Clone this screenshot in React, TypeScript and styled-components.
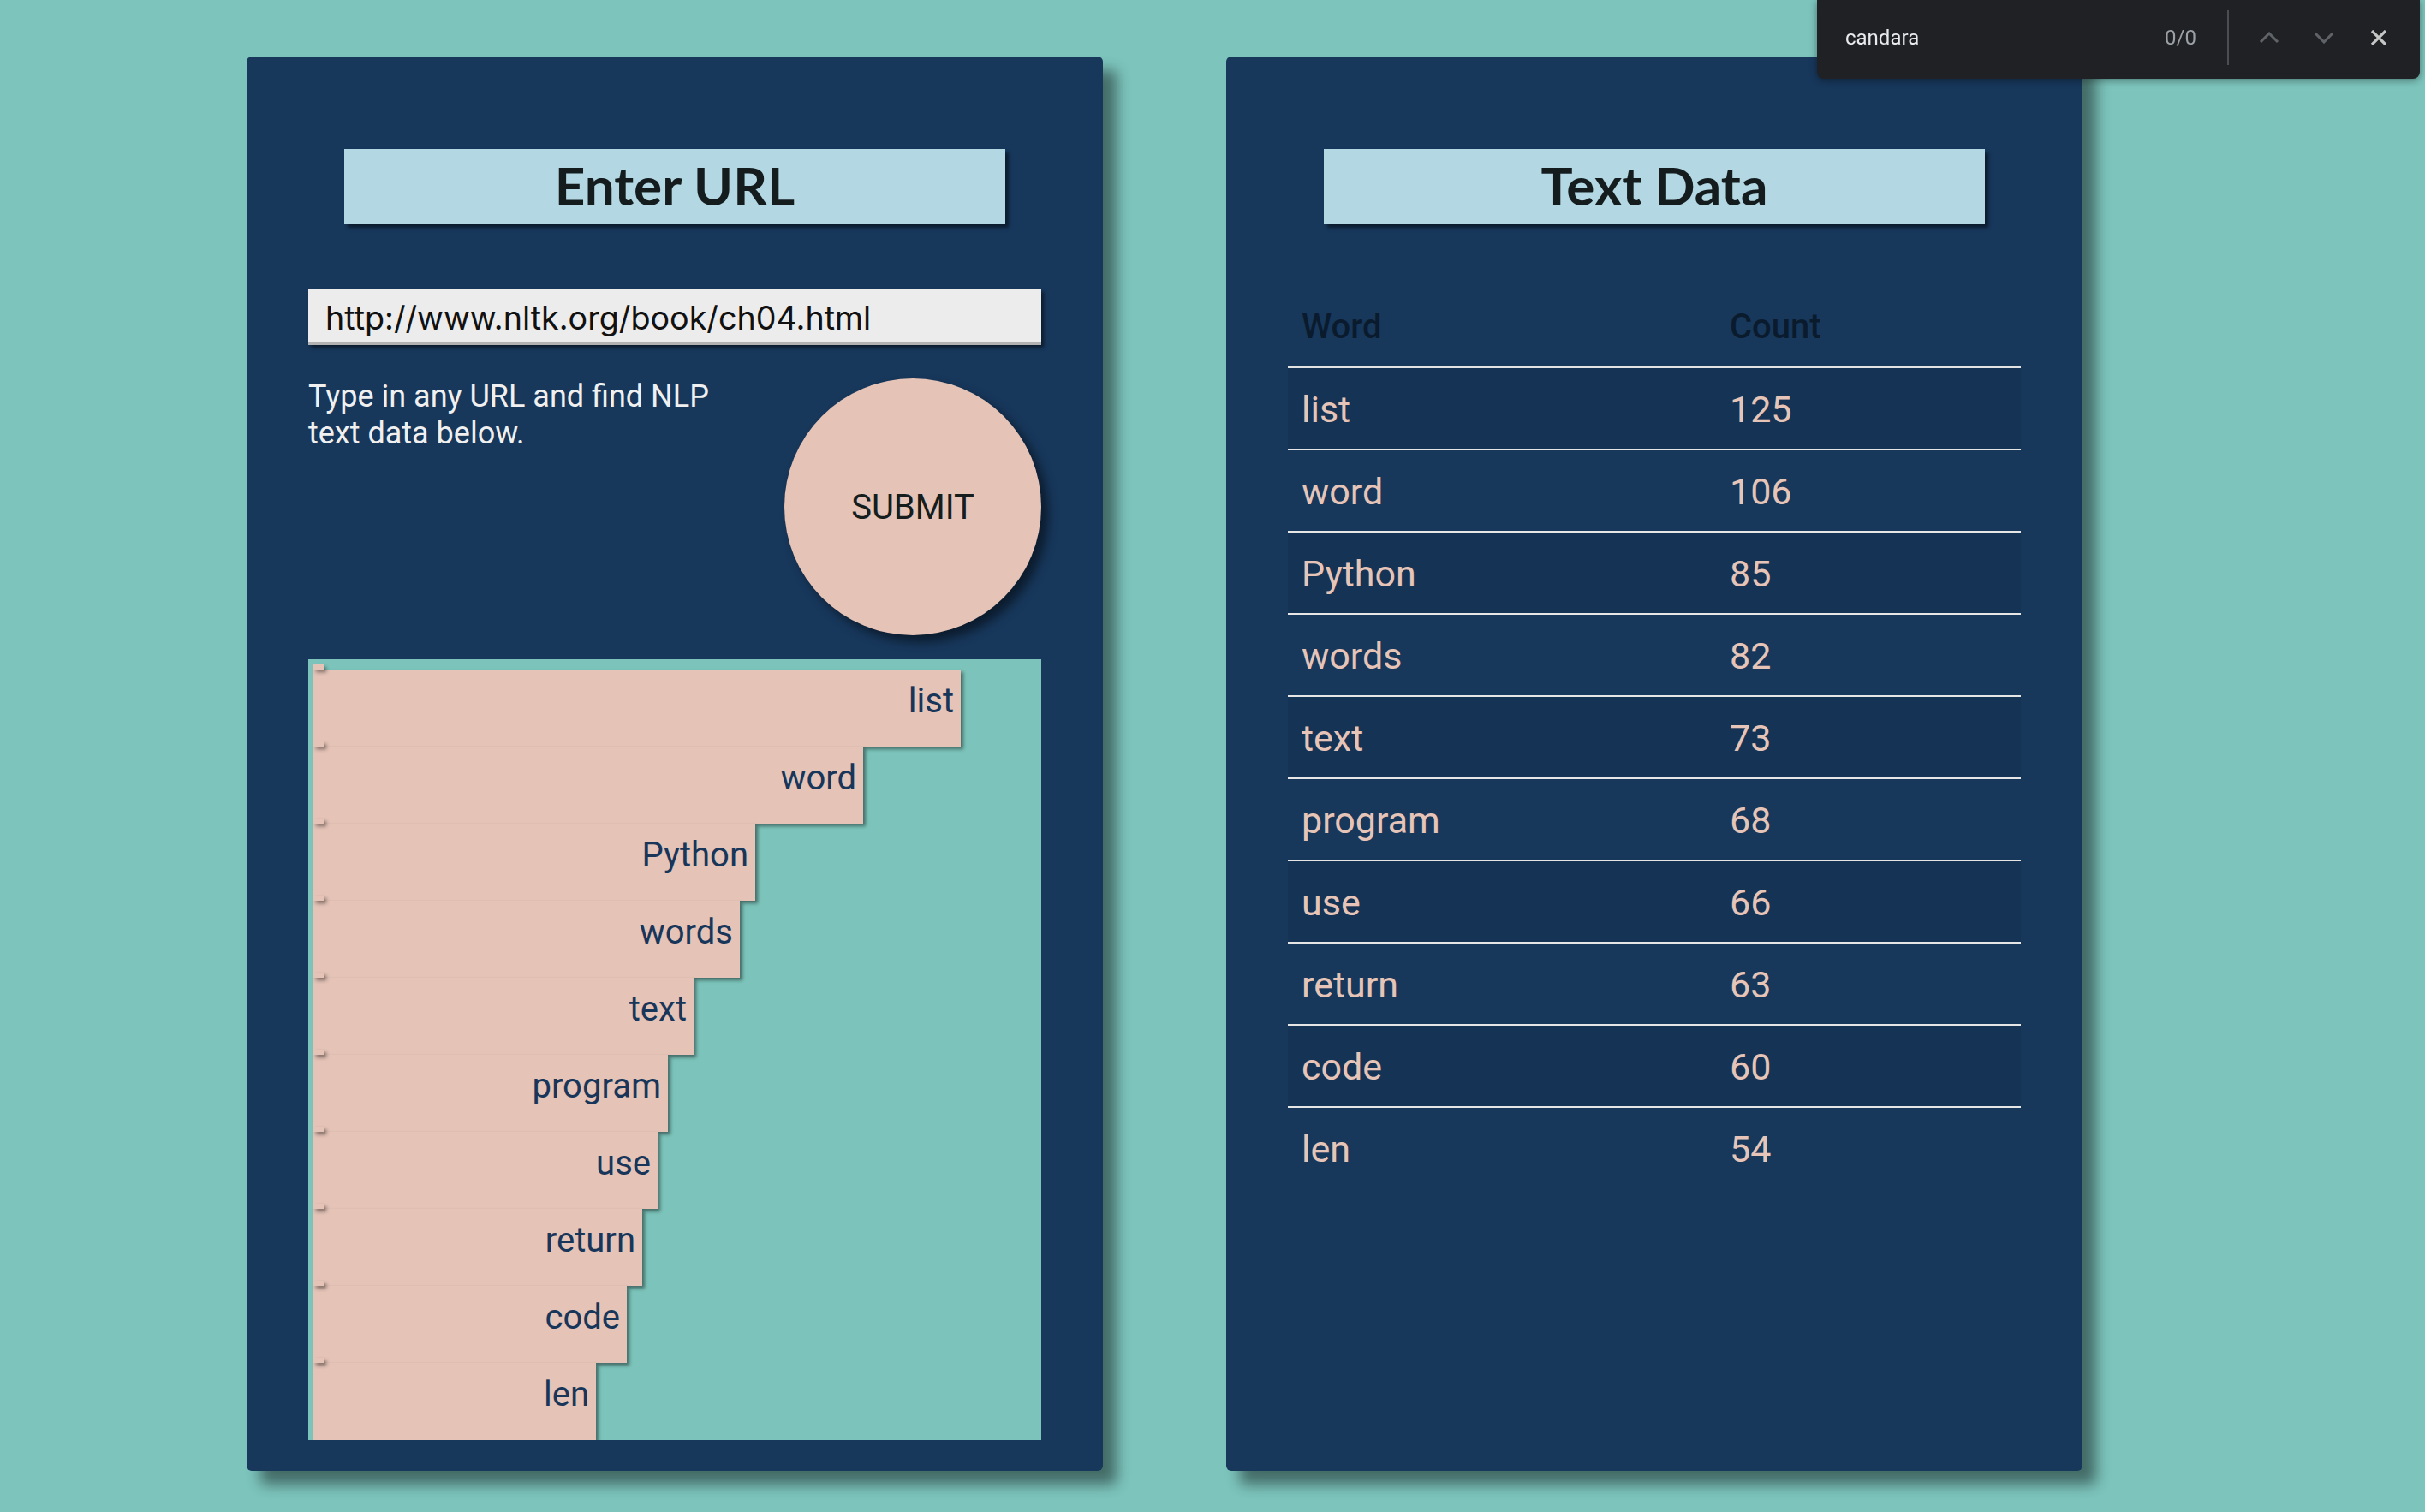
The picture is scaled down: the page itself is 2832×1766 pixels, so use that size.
import React from "react";
import styled, { createGlobalStyle } from "styled-components";

const GlobalStyle = createGlobalStyle`
  html, body {
    margin: 0;
    padding: 0;
    background: #7cc4bc;
  }
  body {
    font-family: Roboto, "Liberation Sans", sans-serif;
  }
  * { box-sizing: border-box; }
`;

type WordCount = { word: string; count: number };

const DATA: WordCount[] = [
  { word: "list", count: 125 },
  { word: "word", count: 106 },
  { word: "Python", count: 85 },
  { word: "words", count: 82 },
  { word: "text", count: 73 },
  { word: "program", count: 68 },
  { word: "use", count: 66 },
  { word: "return", count: 63 },
  { word: "code", count: 60 },
  { word: "len", count: 54 },
];

const Page = styled.main`
  display: flex;
  align-items: flex-start;
  gap: 144px;
  padding: 66px 0 0 288px;
  min-height: 1766px;
  width: 2832px;
`;

const Panel = styled.section`
  width: 1000px;
  height: 1652px;
  flex: none;
  background: #17375b;
  border-radius: 6px;
  box-shadow: 16px 16px 16px rgba(0, 0, 0, 0.45);
  padding: 108px 72px 0;
  display: flex;
  flex-direction: column;
  align-items: center;
`;

const Title = styled.h1`
  width: 772px;
  height: 88px;
  margin: 0;
  flex: none;
  background: #b3d7e3;
  box-shadow: 4px 4px 4px rgba(0, 0, 0, 0.5);
  display: flex;
  align-items: center;
  justify-content: center;
  font-family: Lato, "Open Sans", sans-serif;
  font-weight: 700;
  font-size: 62px;
  color: #141c1e;
  padding-bottom: 4px;
`;

const UrlInput = styled.input`
  margin-top: 76px;
  width: 100%;
  height: 65px;
  flex: none;
  border: none;
  border-bottom: 3px solid #b2b2b2;
  background: #ececec;
  box-shadow: 3px 3px 4px rgba(0, 0, 0, 0.5);
  padding: 4px 20px 0;
  font-family: Inter, "Liberation Sans", sans-serif;
  font-size: 37.7px;
  color: #111;
  outline: none;
`;

const InfoRow = styled.div`
  margin-top: 39px;
  width: 100%;
  display: flex;
  justify-content: space-between;
  align-items: flex-start;
`;

const Hint = styled.p`
  margin: 0;
  width: 500px;
  font-family: Roboto, sans-serif;
  font-size: 36px;
  line-height: 43px;
  color: #f0f0f0;
`;

const SubmitButton = styled.button`
  width: 300px;
  height: 300px;
  flex: none;
  border: none;
  border-radius: 50%;
  background: #e5c3b7;
  box-shadow: 8px 8px 12px rgba(0, 0, 0, 0.5);
  font-family: Roboto, sans-serif;
  font-size: 40px;
  color: #151d1d;
  cursor: pointer;
`;

const Chart = styled.div`
  margin-top: 28px;
  width: 100%;
  height: 912px;
  flex: none;
  background: #7cc4bb;
  overflow: hidden;
  padding: 12px 0 0 6px;
  display: flex;
  flex-direction: column;
  align-items: flex-start;
`;

const Bar = styled.div`
  position: relative;
  height: 90px;
  flex: none;
  background: #e5c3b7;
  box-shadow: 3px 3px 4px rgba(0, 0, 0, 0.45);
  padding: 13px 8px 0 0;
  text-align: right;
  font-family: Roboto, sans-serif;
  font-size: 40px;
  line-height: 47px;
  color: #17365a;

  &::before {
    content: "";
    position: absolute;
    left: 0;
    top: -6px;
    width: 12px;
    height: 6px;
    background: #e5c3b7;
    box-shadow: 3px 3px 4px rgba(0, 0, 0, 0.45);
  }
`;

const Table = styled.table`
  margin-top: 75px;
  width: 100%;
  border-collapse: separate;
  border-spacing: 0;
  font-family: Roboto, sans-serif;
`;

const Th = styled.th<{ $wide?: boolean }>`
  width: ${(p) => (p.$wide ? "500px" : "auto")};
  text-align: left;
  font-weight: 500;
  font-size: 40px;
  line-height: 47px;
  color: #0b1b2e;
  padding: 21px 16px 22px;
  border-bottom: 3px solid #e2e2e2;
`;

const Tr = styled.tr<{ $shade: boolean; $last: boolean }>`
  background: ${(p) => (p.$shade ? "rgba(0, 0, 0, 0.07)" : "transparent")};

  & > td {
    border-bottom: ${(p) => (p.$last ? "none" : "2px solid #e6e6e6")};
  }
`;

const Td = styled.td`
  font-size: 43px;
  line-height: 50px;
  color: #e6c5b8;
  padding: 23px 16px 21px;
`;

const FindBar = styled.div`
  position: fixed;
  top: 0;
  right: 6px;
  width: 704px;
  height: 92px;
  background: #202124;
  border-radius: 0 0 8px 8px;
  box-shadow: 0 2px 8px rgba(0, 0, 0, 0.4);
  display: flex;
  align-items: center;
  padding: 0 16px 4px 33px;
  font-family: Roboto, sans-serif;
  font-size: 24px;
`;

const FindQuery = styled.span`
  flex: 1;
  color: #e8eaed;
`;

const FindCount = styled.span`
  color: #9aa0a6;
  margin-right: 36px;
`;

const FindDivider = styled.span`
  width: 2px;
  height: 64px;
  background: #4a4d51;
  margin-right: 15px;
`;

const FindButton = styled.span`
  width: 64px;
  height: 40px;
  display: flex;
  align-items: center;
  justify-content: center;
`;

const Chevron = ({ up }: { up?: boolean }) => (
  <svg width="24" height="14" viewBox="0 0 24 14">
    <polyline
      points={up ? "2,12 12,2 22,12" : "2,2 12,12 22,2"}
      fill="none"
      stroke="#5f6368"
      strokeWidth="3"
    />
  </svg>
);

const CloseIcon = () => (
  <svg width="20" height="18" viewBox="0 0 20 18">
    <path d="M2 1 L18 17 M18 1 L2 17" stroke="#c4c7c5" strokeWidth="3.2" fill="none" />
  </svg>
);

export default function App() {
  return (
    <>
      <GlobalStyle />
      <Page>
        <Panel>
          <Title>Enter URL</Title>
          <UrlInput defaultValue="http://www.nltk.org/book/ch04.html" />
          <InfoRow>
            <Hint>Type in any URL and find NLP text data below.</Hint>
            <SubmitButton>SUBMIT</SubmitButton>
          </InfoRow>
          <Chart>
            {DATA.map((d) => (
              <Bar key={d.word} style={{ width: d.count * 6 + 6 }}>
                {d.word}
              </Bar>
            ))}
          </Chart>
        </Panel>
        <Panel>
          <Title>Text Data</Title>
          <Table>
            <thead>
              <tr>
                <Th $wide>Word</Th>
                <Th>Count</Th>
              </tr>
            </thead>
            <tbody>
              {DATA.map((d, i) => (
                <Tr key={d.word} $shade={i % 2 === 0} $last={i === DATA.length - 1}>
                  <Td>{d.word}</Td>
                  <Td>{d.count}</Td>
                </Tr>
              ))}
            </tbody>
          </Table>
        </Panel>
      </Page>
      <FindBar>
        <FindQuery>candara</FindQuery>
        <FindCount>0/0</FindCount>
        <FindDivider />
        <FindButton>
          <Chevron up />
        </FindButton>
        <FindButton>
          <Chevron />
        </FindButton>
        <FindButton>
          <CloseIcon />
        </FindButton>
      </FindBar>
    </>
  );
}
